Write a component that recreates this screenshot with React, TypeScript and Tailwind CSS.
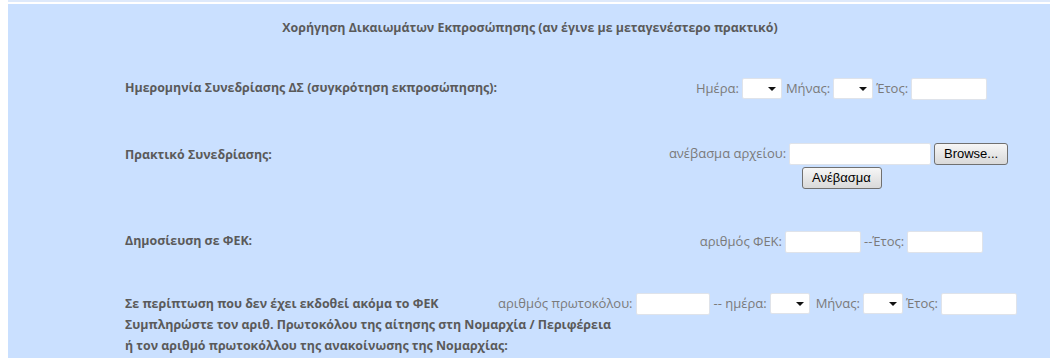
import React from "react";

const labelCls = "font-['Open_Sans',sans-serif] font-bold text-[12.4px] text-[#5a5a5a]";
const txtCls = "font-['Open_Sans',sans-serif] text-[13px] text-[#7a7a7a]";

function Sel({ w = 40 }: { w?: number }) {
  return (
    <div className="relative h-[21px] w-[40px] rounded-[2px] border border-[#dfe3ea] bg-white" style={{ width: w }}>
      <svg className="absolute right-[5px] top-[8px]" width="8" height="4" viewBox="0 0 8 4">
        <path d="M0 0 L8 0 L4 4 Z" fill="#111" />
      </svg>
    </div>
  );
}

function Inp({ w }: { w: number }) {
  return <div className="h-[22px] rounded-[2px] border border-[#dfe3ea] bg-white" style={{ width: w }} />;
}

function Btn({ children, w }: { children: React.ReactNode; w: number }) {
  return (
    <div
      className="flex h-[22px] items-center justify-center rounded-[3px] border border-[#707070] bg-gradient-to-b from-[#f6f6f6] to-[#d9d9d9] font-['Liberation_Sans',sans-serif] text-[13px] text-black"
      style={{ width: w }}
    >
      {children}
    </div>
  );
}

export default function App() {
  return (
    <div className="relative h-[362px] w-[1058px] overflow-hidden bg-white">
      <div className="mx-[8px] h-[2px] bg-[#dde9fb]" />
      <div className="mx-[8px] mt-[2px] h-[354px] bg-[#cae0ff]">
        <div className={`${labelCls} pt-[15px] text-center text-[#4a4a4a]`}>
          <span className="inline-block pl-[2px]">Χορήγηση Δικαιωμάτων Εκπροσώπησης (αν έγινε με μεταγενέστερο πρακτικό)</span>
        </div>

        {/* Row 1 */}
        <div className="mt-[40px] flex items-center pl-[117px] pr-[30px]">
          <div className={`${labelCls} w-[538px]`}>Ημερομηνία Συνεδρίασης ΔΣ (συγκρότηση εκπροσώπησης):</div>
          <div className={`${txtCls} flex flex-1 items-center justify-center gap-[3px]`}>
            <span>Ημέρα:</span>
            <Sel />
            <span className="ml-[1px]">Μήνας:</span>
            <Sel />
            <span>Έτος:</span>
            <Inp w={76} />
          </div>
        </div>

        {/* Row 2 */}
        <div className="mt-[43px] flex items-start pl-[117px] pr-[30px]">
          <div className={`${labelCls} w-[538px] pt-[3px]`}>Πρακτικό Συνεδρίασης:</div>
          <div className="flex flex-1 flex-col items-center">
            <div className={`${txtCls} flex items-center gap-[3px] pr-[6px]`}>
              <span>ανέβασμα αρχείου:</span>
              <Inp w={142} />
              <Btn w={74}>Browse...</Btn>
            </div>
            <div className="mt-[2px]">
              <Btn w={80}>Ανέβασμα</Btn>
            </div>
          </div>
        </div>

        {/* Row 3 */}
        <div className="mt-[42px] flex items-center pl-[117px] pr-[30px]">
          <div className={`${labelCls} w-[538px]`}>Δημοσίευση σε ΦΕΚ:</div>
          <div className={`${txtCls} flex flex-1 items-center justify-center gap-[3px]`}>
            <span>αριθμός ΦΕΚ:</span>
            <Inp w={76} />
            <span>--Έτος:</span>
            <Inp w={76} />
          </div>
        </div>

        {/* Row 4 */}
        <div className="mt-[40px] flex items-start pl-[117px] pr-[30px]">
          <div className={`${labelCls} w-[370px] leading-[21px] whitespace-nowrap`}>
            Σε περίπτωση που δεν έχει εκδοθεί ακόμα το ΦΕΚ
            <br />
            Συμπληρώστε τον αριθ. Πρωτοκόλου της αίτησης στη Νομαρχία / Περιφέρεια
            <br />
            ή τον αριθμό πρωτοκόλλου της ανακοίνωσης της Νομαρχίας:
          </div>
          <div className={`${txtCls} flex flex-1 items-center justify-center gap-[3px]`}>
            <span>αριθμός πρωτοκόλου:</span>
            <Inp w={74} />
            <span className="ml-[1px]">-- ημέρα:</span>
            <Sel />
            <span className="ml-[3px]">Μήνας:</span>
            <Sel />
            <span>Έτος:</span>
            <Inp w={76} />
          </div>
        </div>
      </div>
      <div className="absolute left-[893px] top-[360px] font-['Liberation_Sans',sans-serif] text-[13px] leading-[15px] text-[#e00000]">
        Πεδία με * είναι υποχρεωτικά
      </div>
    </div>
  );
}
